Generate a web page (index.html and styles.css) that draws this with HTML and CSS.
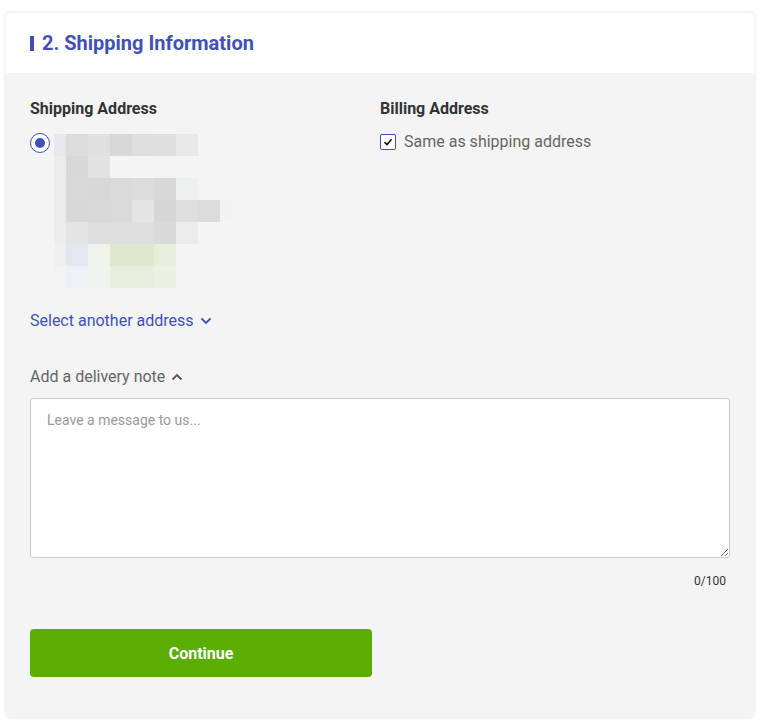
FILE: index.html
```html
<!DOCTYPE html>
<html>
<head>
<meta charset="utf-8">
<link rel="stylesheet" href="styles.css">
</head>
<body>
<div class="card">
  <div class="card-header">
    <h2 class="title">2. Shipping Information</h2>
  </div>
  <div class="card-body">
    <div class="addresses">
      <div class="col">
        <h3 class="col-title">Shipping Address</h3>
        <div class="radio-row">
          <span class="radio"><span class="radio-dot"></span></span>
          <svg class="blurred" width="178" height="154" viewBox="0 0 178 154">
            <rect x="0" y="0" width="12" height="22" fill="#e8e8ec"/>
            <rect x="12" y="0" width="22" height="22" fill="#dcdcdc"/>
            <rect x="34" y="0" width="22" height="22" fill="#e0e0e0"/>
            <rect x="56" y="0" width="22" height="22" fill="#d8d8d8"/>
            <rect x="78" y="0" width="22" height="22" fill="#dedede"/>
            <rect x="100" y="0" width="22" height="22" fill="#dfdfdf"/>
            <rect x="122" y="0" width="22" height="22" fill="#e8e8e8"/>

            <rect x="0" y="22" width="12" height="22" fill="#ececec"/>
            <rect x="12" y="22" width="22" height="22" fill="#d8d8d8"/>
            <rect x="34" y="22" width="22" height="22" fill="#e2e2e2"/>

            <rect x="0" y="44" width="12" height="22" fill="#ececec"/>
            <rect x="12" y="44" width="22" height="22" fill="#d9d9d9"/>
            <rect x="34" y="44" width="22" height="22" fill="#d7d7d7"/>
            <rect x="56" y="44" width="22" height="22" fill="#dadada"/>
            <rect x="78" y="44" width="22" height="22" fill="#dcdcdc"/>
            <rect x="100" y="44" width="22" height="22" fill="#d8d8d8"/>
            <rect x="122" y="44" width="22" height="22" fill="#eeefef"/>

            <rect x="0" y="66" width="12" height="22" fill="#ebebeb"/>
            <rect x="12" y="66" width="22" height="22" fill="#d8d8d8"/>
            <rect x="34" y="66" width="22" height="22" fill="#d9d9d9"/>
            <rect x="56" y="66" width="22" height="22" fill="#dadada"/>
            <rect x="78" y="66" width="22" height="22" fill="#e4e4e4"/>
            <rect x="100" y="66" width="22" height="22" fill="#d6d6d6"/>
            <rect x="122" y="66" width="22" height="22" fill="#dedede"/>
            <rect x="144" y="66" width="22" height="22" fill="#dcdcdc"/>
            <rect x="166" y="66" width="12" height="22" fill="#f1f2f1"/>

            <rect x="0" y="88" width="12" height="22" fill="#ececec"/>
            <rect x="12" y="88" width="22" height="22" fill="#e4e4e4"/>
            <rect x="34" y="88" width="22" height="22" fill="#dedede"/>
            <rect x="56" y="88" width="22" height="22" fill="#dedede"/>
            <rect x="78" y="88" width="22" height="22" fill="#dedede"/>
            <rect x="100" y="88" width="22" height="22" fill="#d9d9d9"/>
            <rect x="122" y="88" width="22" height="22" fill="#ebebeb"/>

            <rect x="0" y="110" width="12" height="22" fill="#efeff1"/>
            <rect x="12" y="110" width="22" height="22" fill="#e2e6ee"/>
            <rect x="34" y="110" width="22" height="22" fill="#f0f3ec"/>
            <rect x="56" y="110" width="22" height="22" fill="#dde8ce"/>
            <rect x="78" y="110" width="22" height="22" fill="#dde8ce"/>
            <rect x="100" y="110" width="22" height="22" fill="#e6eedc"/>

            <rect x="0" y="132" width="12" height="22" fill="#f3f3f4"/>
            <rect x="12" y="132" width="22" height="22" fill="#eef0f6"/>
            <rect x="34" y="132" width="22" height="22" fill="#f1f4ee"/>
            <rect x="56" y="132" width="22" height="22" fill="#e6efdd"/>
            <rect x="78" y="132" width="22" height="22" fill="#e6efdd"/>
            <rect x="100" y="132" width="22" height="22" fill="#eaf1e3"/>
          </svg>
        </div>
      </div>
      <div class="col">
        <h3 class="col-title">Billing Address</h3>
        <label class="check-row">
          <span class="checkbox">
            <svg width="10" height="10" viewBox="0 0 10 10"><path d="M1.5 5.2 L4 7.6 L8.6 2.2" fill="none" stroke="#111" stroke-width="1.6"/></svg>
          </span>
          <span class="check-label">Same as shipping address</span>
        </label>
      </div>
    </div>

    <div class="link-row">
      <span class="link">Select another address</span>
      <svg class="chev" width="12" height="8" viewBox="0 0 12 8"><path d="M1.5 1.5 L6 6 L10.5 1.5" fill="none" stroke="#3f51b5" stroke-width="1.8"/></svg>
    </div>

    <div class="note-row">
      <span class="note">Add a delivery note</span>
      <svg class="chev" width="12" height="8" viewBox="0 0 12 8"><path d="M1.5 6.5 L6 2 L10.5 6.5" fill="none" stroke="#555" stroke-width="1.8"/></svg>
    </div>

    <textarea class="message" placeholder="Leave a message to us..."></textarea>
    <div class="counter">0/100</div>

    <button class="continue">Continue</button>
  </div>
</div>
</body>
</html>
```

FILE: styles.css
```css
* { box-sizing: border-box; }
html, body { background: #ffffff; }
body {
  margin: 0;
  padding: 13px 8px 11px 6px;
  font-family: Roboto, "Noto Sans", Arial, sans-serif;
}
.card {
  background: #f4f4f4;
  border-radius: 4px;
  box-shadow: 0 0 4px rgba(0,0,0,0.14);
  overflow: hidden;
}
.card-header {
  background: #ffffff;
  height: 60px;
  display: flex;
  align-items: center;
  padding-left: 24px;
}
.title {
  margin: 0;
  font-size: 20px;
  font-weight: 700;
  color: #3f51b5;
  display: flex;
  align-items: center;
  line-height: 24px;
}
.title::before {
  content: "";
  display: block;
  width: 4px;
  height: 15px;
  background: #3f51b5;
  margin-right: 8px;
}
.card-body {
  padding: 26px 24px 40px 24px;
}
.addresses {
  display: grid;
  grid-template-columns: 350px 350px;
}
.col-title {
  margin: 0;
  font-size: 16px;
  line-height: 19px;
  font-weight: 700;
  color: #333333;
}
.radio-row {
  display: flex;
  align-items: flex-start;
  margin-top: 15px;
  gap: 4px;
}
.radio {
  width: 20px;
  height: 20px;
  border: 1.5px solid #3f51b5;
  border-radius: 50%;
  display: flex;
  align-items: center;
  justify-content: center;
  background: #fff;
  flex: none;
}
.radio-dot {
  width: 10px;
  height: 10px;
  border-radius: 50%;
  background: #3f51b5;
}
.blurred { display: block; margin-top: 1px; }
.check-row {
  display: flex;
  align-items: center;
  margin-top: 14px;
  gap: 8px;
}
.checkbox {
  width: 16px;
  height: 16px;
  border: 1.5px solid #3f51b5;
  border-radius: 2px;
  background: #fff;
  display: flex;
  align-items: center;
  justify-content: center;
}
.checkbox svg { display: block; }
.check-label {
  font-size: 16px;
  color: #666666;
  line-height: 19px;
}
.link-row, .note-row {
  display: flex;
  align-items: center;
  gap: 6px;
  font-size: 16px;
  line-height: 19px;
}
.link-row { margin-top: 23px; color: #3f51b5; }
.note-row { margin-top: 37px; color: #666666; }
.chev { display: block; }
.message {
  display: block;
  width: 100%;
  height: 160px;
  margin-top: 12px;
  border: 1px solid #cccccc;
  border-radius: 3px;
  background: #ffffff;
  padding: 13px 16px;
  font-family: Roboto, "Noto Sans", Arial, sans-serif;
  font-size: 14px;
  color: #333;
  resize: vertical;
}
.message::placeholder { color: #999999; }
.counter {
  text-align: right;
  font-size: 12px;
  line-height: 14px;
  color: #333333;
  margin-top: 16px;
  padding-right: 4px;
}
.continue {
  display: block;
  margin-top: 41px;
  width: 342px;
  height: 48px;
  border: none;
  border-radius: 4px;
  background: #59ae00;
  color: #ffffff;
  font-family: Roboto, "Noto Sans", Arial, sans-serif;
  font-size: 16px;
  font-weight: 700;
}
```
